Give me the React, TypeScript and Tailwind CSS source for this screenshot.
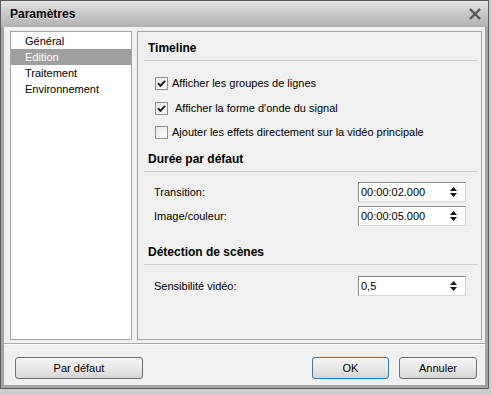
import React from "react";

const font = "font-['Liberation_Sans',Arial,sans-serif]";

function Check({ checked }: { checked: boolean }) {
  return (
    <span className="w-[13px] h-[13px] border border-[#8f8f8f] bg-gradient-to-br from-[#e6e6e6] to-white flex items-center justify-center shrink-0">
      {checked && (
        <svg width="9" height="9" viewBox="0 0 9 9">
          <path d="M1 4.2 L3.5 6.8 L8 1.8" fill="none" stroke="#1e1e1e" strokeWidth="2" />
        </svg>
      )}
    </span>
  );
}

function Spin({ value }: { value: string }) {
  return (
    <div className="w-[108px] h-[20px] border border-[#8a8a8a] border-b-[#d8d8d8] border-r-[#d8d8d8] bg-white flex items-center pl-[2px] pr-[7px]">
      <span className="flex-1 text-[11px] text-black">{value}</span>
      <svg width="9" height="12" viewBox="0 0 9 12">
        <path d="M4.5 1 L8 5 L1 5 Z" fill="#111" />
        <path d="M1 7 L8 7 L4.5 11 Z" fill="#111" />
      </svg>
    </div>
  );
}

function Heading({ text, top }: { text: string; top: string }) {
  return (
    <div className={`${top} border-b border-[#cfcfcf] pb-[4px]`}>
      <div className="pl-[4px] h-[15px] leading-[15px] font-bold text-[12px] text-black">{text}</div>
    </div>
  );
}

function Field({ label, value, top }: { label: string; value: string; top: string }) {
  return (
    <div className={`${top} h-[20px] flex items-center pl-[10px] pr-[12px]`}>
      <span className="flex-1">{label}</span>
      <Spin value={value} />
    </div>
  );
}

function Btn({ label, w, primary }: { label: string; w: string; primary?: boolean }) {
  return (
    <div
      className={`${w} h-[22px] rounded-[3px] border ${
        primary ? "border-[#3d7bad]" : "border-[#707070]"
      } bg-gradient-to-b from-[#f4f4f4] via-[#e9e9e9] to-[#d4d4d4] flex items-center justify-center text-[11px] text-black`}
    >
      {label}
    </div>
  );
}

export default function App() {
  const items = ["Général", "Edition", "Traitement", "Environnement"];
  return (
    <div className={`w-[492px] h-[395px] bg-[#cdcdcd] ${font} text-[11px] text-black`}>
      <div className="w-[489px] h-[389px] flex flex-col border border-[#5c5c5c] bg-[#f0f0f0]">
        {/* Title bar */}
        <div className="h-[26px] flex items-center pl-[9px] pr-[6px] bg-gradient-to-b from-[#e4e4e4] via-[#c6c6c6] to-[#b2b2b2]">
          <span className="flex-1 font-bold text-[12px] [text-shadow:0_1px_0_#eeeeee]">Paramètres</span>
          <svg width="14" height="14" viewBox="0 0 14 14">
            <path d="M2 2 L12 12 M12 2 L2 12" stroke="#555555" strokeWidth="2.4" />
          </svg>
        </div>

        {/* Body */}
        <div className="flex-1 flex flex-col border-x-[3px] border-b-[3px] border-[#a3a3a3]">
          <div className="flex gap-[5px] pl-[6px] pr-[3px] pt-[4px] h-[313px]">
            {/* List */}
            <div className="w-[122px] h-[309px] bg-white border border-[#a5a5a5] pt-[1px]">
              {items.map((it) => (
                <div
                  key={it}
                  className={`h-[16px] leading-[16px] pl-[14px] text-[11px] ${
                    it === "Edition" ? "bg-[#9f9f9f] text-white" : "text-black"
                  }`}
                >
                  {it}
                </div>
              ))}
            </div>

            {/* Settings panel */}
            <div className="flex-1 h-[309px] border border-[#a5a5a5] bg-[#f0f0f0] px-[6px] pr-[3px] flex flex-col">
              <Heading text="Timeline" top="mt-[9px]" />
              <div className="mt-[10px] flex flex-col pl-[11px]">
                <div className="h-[25px] flex items-center gap-[4px]">
                  <Check checked />
                  <span>Afficher les groupes de lignes</span>
                </div>
                <div className="h-[24px] flex items-center gap-[4px]">
                  <Check checked />
                  <span className="pl-[3px]">Afficher la forme d'onde du signal</span>
                </div>
                <div className="h-[24px] flex items-center gap-[4px]">
                  <Check checked={false} />
                  <span>Ajouter les effets directement sur la vidéo principale</span>
                </div>
              </div>

              <Heading text="Durée par défaut" top="mt-[8px]" />
              <Field label="Transition:" value="00:00:02.000" top="mt-[10px]" />
              <Field label="Image/couleur:" value="00:00:05.000" top="mt-[4px]" />

              <Heading text="Détection de scènes" top="mt-[19px]" />
              <Field label="Sensibilité vidéo:" value="0,5" top="mt-[11px]" />
            </div>
          </div>

          {/* Separator + buttons */}
          <div className="mt-[3px] border-t border-[#a8a8a8] shadow-[inset_0_1px_0_#ffffff] flex items-center pl-[11px] pr-[8px] pt-[13px]">
            <Btn label="Par défaut" w="w-[128px]" />
            <div className="flex-1" />
            <Btn label="OK" w="w-[77px]" primary />
            <div className="w-[10px]" />
            <Btn label="Annuler" w="w-[78px]" />
          </div>
        </div>
      </div>
    </div>
  );
}
